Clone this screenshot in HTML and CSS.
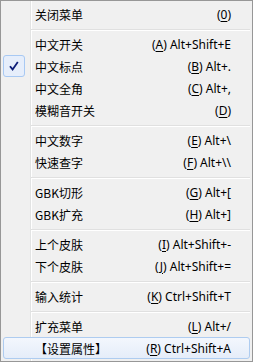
FILE: index.html
```html
<!DOCTYPE html>
<html lang="zh-CN">
<head>
    <meta charset="UTF-8">
    <title>输入法菜单</title>
    <link rel="stylesheet" href="styles.css">
</head>
<body>

    <!-- Context menu -->
    <div class="menu">
        <div class="item">
            <span class="label">关闭菜单</span>
            <span class="key">(<u>0</u>)</span>
        </div>
        <div class="sep"></div>

        <div class="item">
            <span class="label">中文开关</span>
            <span class="key">(<u>A</u>) Alt+Shift+E</span>
        </div>
        <div class="item">
            <span class="check">
                <svg width="10" height="10" viewBox="0 0 10 10"><path d="M1 5.2 L3.6 8.4 L8.8 1" fill="none" stroke="#0d1d78" stroke-width="1.8"/></svg>
            </span>
            <span class="label">中文标点</span>
            <span class="key">(<u>B</u>) Alt+.</span>
        </div>
        <div class="item">
            <span class="label">中文全角</span>
            <span class="key">(<u>C</u>) Alt+,</span>
        </div>
        <div class="item">
            <span class="label">模糊音开关</span>
            <span class="key">(<u>D</u>)</span>
        </div>
        <div class="sep"></div>

        <div class="item">
            <span class="label">中文数字</span>
            <span class="key">(<u>E</u>) Alt+\</span>
        </div>
        <div class="item">
            <span class="label">快速查字</span>
            <span class="key">(<u>F</u>) Alt+\\</span>
        </div>
        <div class="sep"></div>

        <div class="item">
            <span class="label">GBK切形</span>
            <span class="key">(<u>G</u>) Alt+[</span>
        </div>
        <div class="item">
            <span class="label">GBK扩充</span>
            <span class="key">(<u>H</u>) Alt+]</span>
        </div>
        <div class="sep"></div>

        <div class="item">
            <span class="label">上个皮肤</span>
            <span class="key">(<u>I</u>) Alt+Shift+-</span>
        </div>
        <div class="item">
            <span class="label">下个皮肤</span>
            <span class="key">(<u>J</u>) Alt+Shift+=</span>
        </div>
        <div class="sep"></div>

        <div class="item">
            <span class="label">输入统计</span>
            <span class="key">(<u>K</u>) Ctrl+Shift+T</span>
        </div>
        <div class="sep"></div>

        <div class="item">
            <span class="label">扩充菜单</span>
            <span class="key">(<u>L</u>) Alt+/</span>
        </div>
        <div class="item hover">
            <span class="label">【设置属性】</span>
            <span class="key">(<u>R</u>) Ctrl+Shift+A</span>
        </div>
    </div>

</body>
</html>
```

FILE: styles.css
```css
/* Global */
body {
    margin: 0;
    font-family: "Noto Sans", "Noto Sans CJK SC", sans-serif;
    font-size: 12px;
    color: #000;
}

/* Menu box with the gutter line */
.menu {
    box-sizing: border-box;
    width: 253px;
    height: 362px;
    padding: 2px;
    border: 1px solid #979797;
    background:
        linear-gradient(to right,
            transparent 29px, #e2e3e3 29px, #e2e3e3 30px,
            #fff 30px, #fff 31px, transparent 31px)
        #f0f0f0;
}

.item {
    position: relative;
    box-sizing: border-box;
    height: 22px;
    display: flex;
    align-items: center;
    justify-content: space-between;
    padding: 0 18px 0 32px;
    border: 1px solid transparent;
    border-radius: 3px;
}

.label {
    font-family: "Noto Sans CJK SC", sans-serif;
    margin-left: -1px;
}

.key {
    white-space: pre;
}

.key u {
    text-decoration-thickness: 1px;
    text-underline-offset: 2px;
}

/* checked item box */
.check {
    position: absolute;
    left: -1px;
    top: -1px;
    box-sizing: border-box;
    width: 22px;
    height: 22px;
    border: 1px solid #a8c9f3;
    border-radius: 3px;
    background: #e6eefb;
    display: flex;
    align-items: center;
    justify-content: center;
}

/* highlighted item */
.item.hover {
    border-color: #aeccf0;
    background: linear-gradient(to bottom, #f3f7fd, #e5edf9);
}

.sep {
    height: 8px;
    margin-left: 28px;
    background: linear-gradient(to bottom,
        transparent 4px, #e0e0e0 4px, #e0e0e0 5px,
        #fff 5px, #fff 6px, transparent 6px);
}
```
